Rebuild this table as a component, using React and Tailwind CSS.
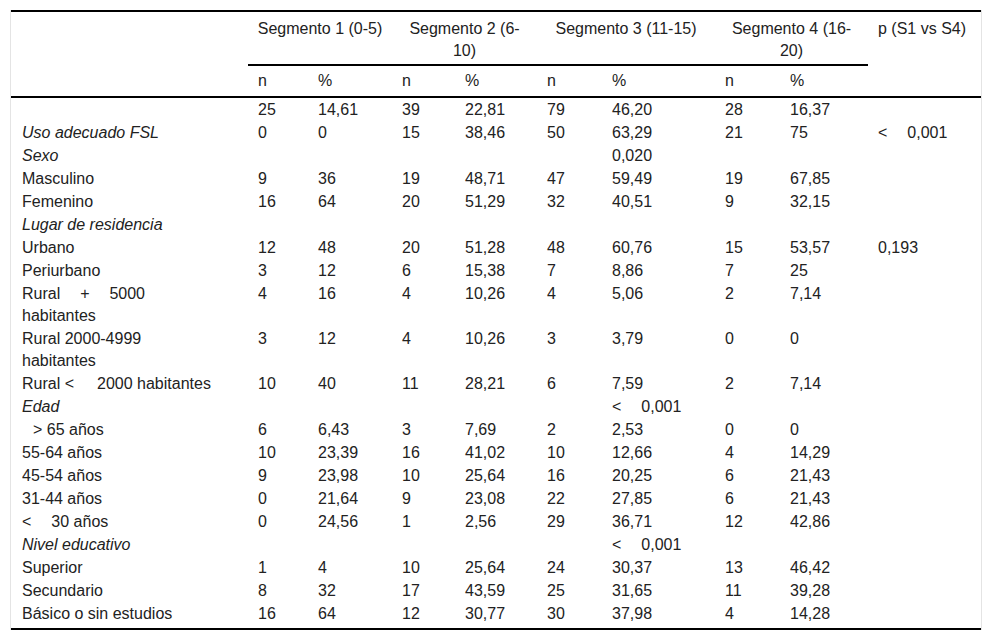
import React from "react";

const LT = ({ v }) => (
  <span className="whitespace-nowrap">
    <span>&lt;</span>
    <span className="ml-[20px]">{v}</span>
  </span>
);

const rows = [
  { label: "", cells: ["25", "14,61", "39", "22,81", "79", "46,20", "28", "16,37", ""] },
  { label: "Uso adecuado FSL", italic: true, cells: ["0", "0", "15", "38,46", "50", "63,29", "21", "75", <LT v="0,001" />] },
  { label: "Sexo", italic: true, cells: ["", "", "", "", "", "0,020", "", "", ""] },
  { label: "Masculino", cells: ["9", "36", "19", "48,71", "47", "59,49", "19", "67,85", ""] },
  { label: "Femenino", cells: ["16", "64", "20", "51,29", "32", "40,51", "9", "32,15", ""] },
  { label: "Lugar de residencia", italic: true, cells: ["", "", "", "", "", "", "", "", ""] },
  { label: "Urbano", cells: ["12", "48", "20", "51,28", "48", "60,76", "15", "53,57", "0,193"] },
  { label: "Periurbano", cells: ["3", "12", "6", "15,38", "7", "8,86", "7", "25", ""] },
  {
    label: (
      <>
        <span className="flex w-[123px] justify-between">
          <span>Rural</span>
          <span>+</span>
          <span>5000</span>
        </span>
        <span className="block">habitantes</span>
      </>
    ),
    cells: ["4", "16", "4", "10,26", "4", "5,06", "2", "7,14", ""],
  },
  {
    label: (
      <>
        Rural 2000-4999
        <br />
        habitantes
      </>
    ),
    cells: ["3", "12", "4", "10,26", "3", "3,79", "0", "0", ""],
  },
  {
    label: (
      <span className="whitespace-nowrap">
        Rural &lt;<span className="ml-[23px]">2000 habitantes</span>
      </span>
    ),
    cells: ["10", "40", "11", "28,21", "6", "7,59", "2", "7,14", ""],
  },
  { label: "Edad", italic: true, cells: ["", "", "", "", "", <LT v="0,001" />, "", "", ""] },
  {
    label: <span className="pl-[11px]">&gt; 65 años</span>,
    cells: ["6", "6,43", "3", "7,69", "2", "2,53", "0", "0", ""],
  },
  { label: "55-64 años", cells: ["10", "23,39", "16", "41,02", "10", "12,66", "4", "14,29", ""] },
  { label: "45-54 años", cells: ["9", "23,98", "10", "25,64", "16", "20,25", "6", "21,43", ""] },
  { label: "31-44 años", cells: ["0", "21,64", "9", "23,08", "22", "27,85", "6", "21,43", ""] },
  { label: <LT v="30 años" />, cells: ["0", "24,56", "1", "2,56", "29", "36,71", "12", "42,86", ""] },
  { label: "Nivel educativo", italic: true, cells: ["", "", "", "", "", <LT v="0,001" />, "", "", ""] },
  { label: "Superior", cells: ["1", "4", "10", "25,64", "24", "30,37", "13", "46,42", ""] },
  { label: "Secundario", cells: ["8", "32", "17", "43,59", "25", "31,65", "11", "39,28", ""] },
  { label: "Básico o sin estudios", cells: ["16", "64", "12", "30,77", "30", "37,98", "4", "14,28", ""] },
];

export default function App() {
  return (
    <div
      className="min-h-[641px] w-full bg-white pt-[10px] pl-[10px] text-[#222] text-[16px]"
      style={{ fontFamily: '"Liberation Sans", Arial, sans-serif' }}
    >
      <div className="w-[972px] border-x border-[#e4e4e4]">
        <table className="w-[970px] table-fixed border-separate border-spacing-0 border-t-2 border-b-2 border-black leading-[22px]">
          <colgroup>
            <col className="w-[237px]" />
            <col className="w-[60px]" />
            <col className="w-[84px]" />
            <col className="w-[63px]" />
            <col className="w-[82px]" />
            <col className="w-[65px]" />
            <col className="w-[113px]" />
            <col className="w-[65px]" />
            <col className="w-[88px]" />
            <col className="w-[113px]" />
          </colgroup>
          <thead>
            <tr>
              <th rowSpan={2} className="border-b-2 border-black p-0 font-normal"></th>
              <th colSpan={2} className="border-b-2 border-black px-[8px] pt-[6px] pb-[2px] text-center align-top font-normal">
                Segmento 1 (0-5)
              </th>
              <th colSpan={2} className="border-b-2 border-black px-[8px] pt-[6px] pb-[2px] text-center align-top font-normal">
                Segmento 2 (6-10)
              </th>
              <th colSpan={2} className="border-b-2 border-black px-[8px] pt-[6px] pb-[2px] text-center align-top font-normal">
                Segmento 3 (11-15)
              </th>
              <th colSpan={2} className="border-b-2 border-black px-[8px] pt-[6px] pb-[2px] text-center align-top font-normal">
                Segmento 4 (16-20)
              </th>
              <th rowSpan={2} className="border-b-2 border-black px-[10px] pt-[6px] text-left align-top font-normal whitespace-nowrap">
                p (S1 vs S4)
              </th>
            </tr>
            <tr>
              {["n", "%", "n", "%", "n", "%", "n", "%"].map((h, i) => (
                <th key={i} className="border-b-2 border-black px-[10px] pt-[4px] pb-[4px] text-left align-top font-normal">
                  {h}
                </th>
              ))}
            </tr>
          </thead>
          <tbody>
            {rows.map((r, i) => {
              const last = i === rows.length - 1;
              return (
                <tr key={i}>
                  <td
                    className={`pl-[11px] pr-[10px] pt-px align-top text-left ${last ? "pb-[3px]" : "pb-0"} ${
                      r.italic ? "italic" : ""
                    }`}
                  >
                    {r.label}
                  </td>
                  {r.cells.map((c, j) => (
                    <td
                      key={j}
                      className={`px-[10px] pt-px align-top text-left whitespace-nowrap ${last ? "pb-[3px]" : "pb-0"}`}
                    >
                      {c}
                    </td>
                  ))}
                </tr>
              );
            })}
          </tbody>
        </table>
      </div>
    </div>
  );
}
